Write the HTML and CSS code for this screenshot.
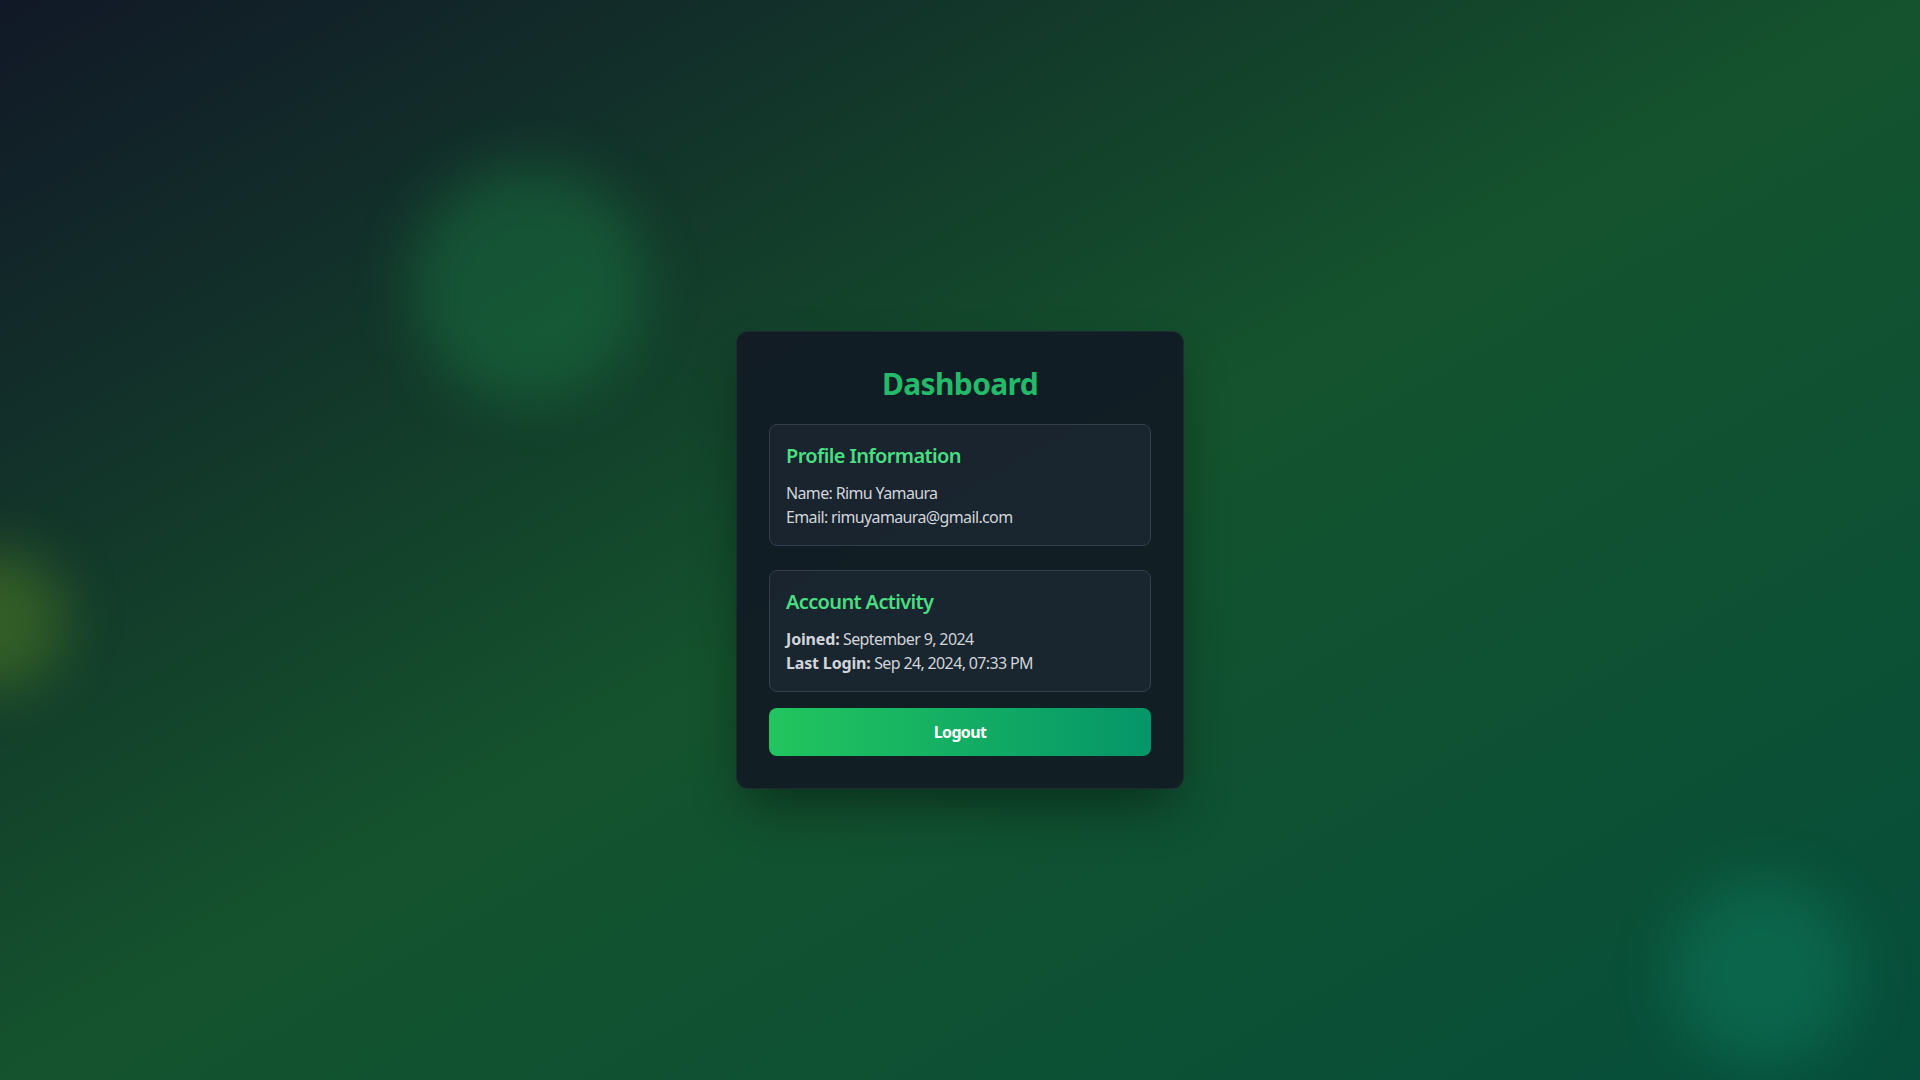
FILE: index.html
```html
<!DOCTYPE html>
<html lang="en">
<head>
<meta charset="utf-8">
<title>Dashboard</title>
<link rel="stylesheet" href="styles.css">
</head>
<body>
<div class="bg">
  <div class="blob blob-a"></div>
  <div class="blob blob-b"></div>
  <div class="blob blob-c"></div>
</div>
<main class="page">
  <section class="card">
    <h1 class="title">Dashboard</h1>
    <div class="panel">
      <h2 class="panel-title">Profile Information</h2>
      <p class="line">Name: Rimu Yamaura</p>
      <p class="line">Email: rimuyamaura@gmail.com</p>
    </div>
    <div class="panel">
      <h2 class="panel-title">Account Activity</h2>
      <p class="line"><strong>Joined:</strong> September 9, 2024</p>
      <p class="line"><strong>Last Login:</strong> Sep 24, 2024, 07:33 PM</p>
    </div>
    <button class="logout" type="button">Logout</button>
  </section>
</main>
</body>
</html>
```

FILE: styles.css
```css
* { box-sizing: border-box; }
html, body { margin: 0; padding: 0; }
body {
  width: 1920px;
  height: 1080px;
  overflow: hidden;
  font-family: "Noto Sans", "Open Sans", sans-serif;
  letter-spacing: -0.04em;
  background: linear-gradient(to bottom right, #111827 0%, #14532d 50%, #064e3b 100%);
  position: relative;
}
.bg {
  position: absolute;
  inset: 0;
  overflow: hidden;
  pointer-events: none;
}
.blob {
  position: absolute;
  border-radius: 50%;
  filter: blur(28px);
}
.blob-a {
  left: 410px;
  top: 165px;
  width: 235px;
  height: 235px;
  background: rgba(34, 197, 94, 0.22);
}
.blob-b {
  left: -75px;
  top: 550px;
  width: 140px;
  height: 140px;
  background: rgba(150, 204, 22, 0.25);
}
.blob-c {
  left: 1670px;
  top: 880px;
  width: 185px;
  height: 185px;
  background: rgba(20, 184, 140, 0.22);
}
.page {
  position: relative;
  min-height: 1080px;
  padding-top: 40px;
  display: flex;
  align-items: center;
  justify-content: center;
}
.card {
  width: 448px;
  padding: 32px;
  background: rgba(17, 26, 36, 0.93);
  border: 1px solid rgba(40, 52, 62, 0.6);
  border-radius: 12px;
  box-shadow: 0 25px 50px -12px rgba(0, 0, 0, 0.45);
  display: flex;
  flex-direction: column;
}
.title {
  margin: 0 0 22px;
  padding-top: 2px;
  font-size: 30px;
  line-height: 36px;
  font-weight: 700;
  text-align: center;
  color: #25b96a;
}
.panel {
  background: rgba(31, 41, 55, 0.6);
  border: 1px solid #333e4d;
  border-radius: 8px;
  padding: 16px;
  margin-bottom: 24px;
}
.panel + .panel { margin-bottom: 16px; }
.panel-title {
  margin: 0 0 11px;
  padding-top: 1px;
  font-size: 20px;
  line-height: 28px;
  font-weight: 600;
  color: #4ade80;
}
.line {
  margin: 0;
  font-size: 16px;
  line-height: 24px;
  color: #d1d5db;
}
.line strong {
  font-weight: 700;
  letter-spacing: -0.01em;
}
.logout {
  display: block;
  width: 100%;
  height: 48px;
  border: 0;
  border-radius: 8px;
  background: linear-gradient(to right, #22c55e, #059669);
  color: #ffffff;
  font-family: inherit;
  letter-spacing: inherit;
  font-size: 16px;
  font-weight: 700;
  cursor: pointer;
}
```
